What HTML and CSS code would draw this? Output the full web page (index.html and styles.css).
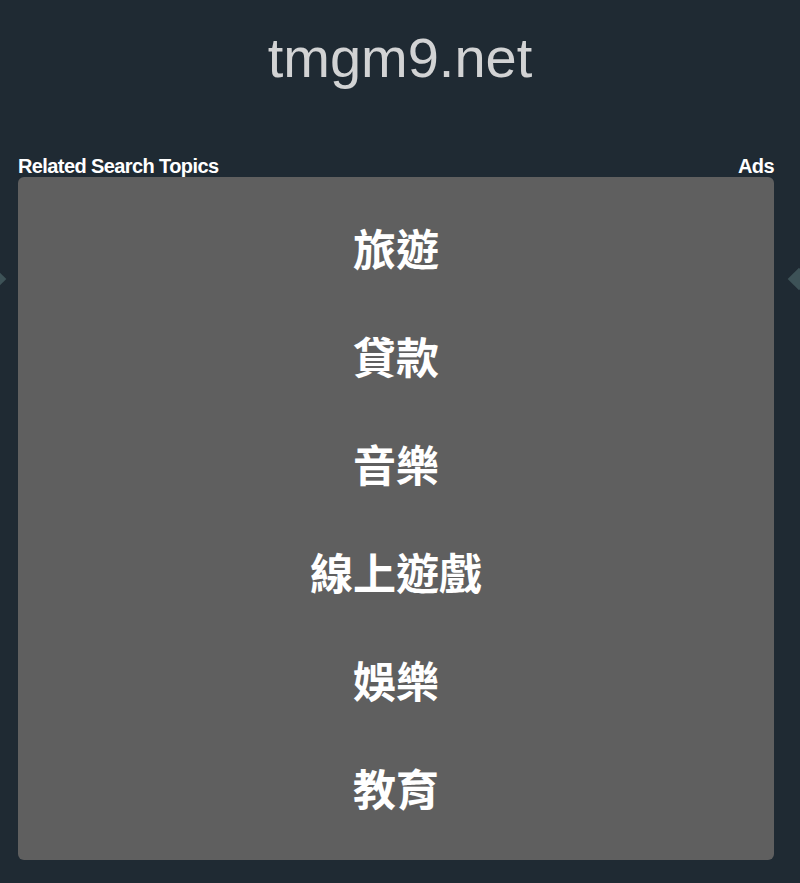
FILE: index.html
```html
<!DOCTYPE html>
<html lang="zh-Hant">
<head>
<meta charset="utf-8">
<title>tmgm9.net</title>
<link rel="stylesheet" href="styles.css">
</head>
<body>
<div class="page">
  <header class="site-header">
    <h1 class="domain">tmgm9.net</h1>
  </header>
  <section class="topics">
    <div class="topics-bar">
      <span class="topics-label">Related Search Topics</span>
      <span class="topics-ads">Ads</span>
    </div>
    <div class="topics-box">
      <a class="topic" href="#">旅遊</a>
      <a class="topic" href="#">貸款</a>
      <a class="topic" href="#">音樂</a>
      <a class="topic" href="#">線上遊戲</a>
      <a class="topic" href="#">娛樂</a>
      <a class="topic" href="#">教育</a>
    </div>
  </section>
  <span class="nav-arrow nav-left"></span>
  <span class="nav-arrow nav-right"></span>
</div>
</body>
</html>
```
FILE: styles.css
```css
html, body {
  margin: 0;
  padding: 0;
  background: #1f2a33;
  height: 100%;
  overflow: hidden;
}
.page {
  position: relative;
  min-height: 883px;
  font-family: "Liberation Sans", Arial, "Noto Sans CJK TC", sans-serif;
}
.site-header {
  display: flex;
  justify-content: center;
  padding-top: 26px;
}
.domain {
  margin: 0;
  font-size: 56px;
  font-weight: normal;
  color: #d2d3d4;
  line-height: 64px;
}
.topics {
  padding: 61px 26px 0 18px;
}
.topics-bar {
  display: flex;
  justify-content: space-between;
  align-items: flex-end;
  height: 26px;
  color: #ffffff;
  font-size: 20px;
  font-weight: bold;
  letter-spacing: -0.6px;
  line-height: 22px;
}
.topics-box {
  background: #5f5f5f;
  border-radius: 6px;
  height: 683px;
  box-sizing: border-box;
  padding: 16px 0 18px;
  display: flex;
  flex-direction: column;
}
.topic {
  flex: 1;
  display: flex;
  align-items: center;
  justify-content: center;
  color: #ffffff;
  text-decoration: none;
  font-family: "Noto Sans CJK TC", "Liberation Sans", sans-serif;
  font-weight: bold;
  font-size: 43px;
  line-height: 1;
}
.nav-arrow {
  position: absolute;
  top: 271px;
  width: 16px;
  height: 16px;
  background: #3d5257;
  transform: rotate(45deg);
}
.nav-left {
  left: -13px;
}
.nav-right {
  right: -7px;
}
```
